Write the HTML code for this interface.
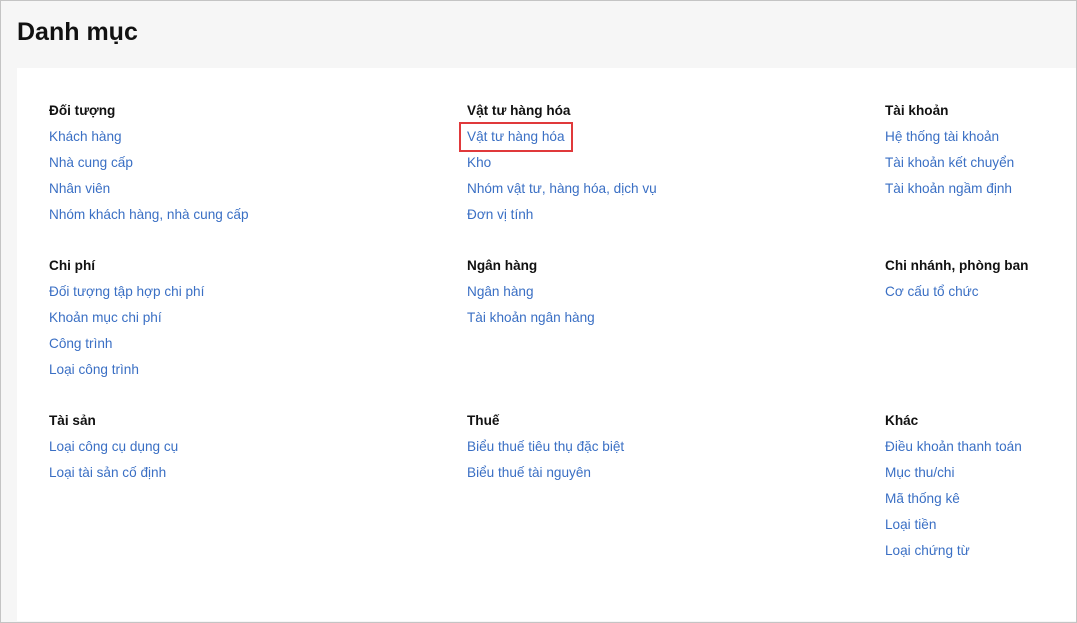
<!DOCTYPE html>
<html><head><meta charset="utf-8"><style>
html,body{margin:0;padding:0}
body{width:1077px;height:623px;overflow:hidden;background:#f6f6f6;font-family:"Liberation Sans","DejaVu Sans",sans-serif;position:relative;box-sizing:border-box;border:1px solid #c4c4c4}
h1{position:absolute;left:16px;top:17px;margin:0;font-size:25px;font-weight:bold;color:#111}
.panel{position:absolute;left:16px;top:67px;right:0;bottom:1px;background:#fff}
.t,.l{position:absolute;white-space:nowrap;font-size:13.6px;line-height:18px}
.t{font-weight:bold;color:#111}
.l{color:#3a6fc4}
.box{position:absolute;left:458px;top:121px;width:110px;height:26px;border:2px solid #e0393b}
</style></head><body>
<h1>Danh mục</h1>
<div class="panel"></div>
<div class="t" style="left:48px;top:101px">Đối tượng</div>
<div class="l" style="left:48px;top:127px">Khách hàng</div>
<div class="l" style="left:48px;top:153px">Nhà cung cấp</div>
<div class="l" style="left:48px;top:179px">Nhân viên</div>
<div class="l" style="left:48px;top:205px">Nhóm khách hàng, nhà cung cấp</div>
<div class="t" style="left:466px;top:101px">Vật tư hàng hóa</div>
<div class="l" style="left:466px;top:127px">Vật tư hàng hóa</div>
<div class="l" style="left:466px;top:153px">Kho</div>
<div class="l" style="left:466px;top:179px">Nhóm vật tư, hàng hóa, dịch vụ</div>
<div class="l" style="left:466px;top:205px">Đơn vị tính</div>
<div class="box"></div>
<div class="t" style="left:884px;top:101px">Tài khoản</div>
<div class="l" style="left:884px;top:127px">Hệ thống tài khoản</div>
<div class="l" style="left:884px;top:153px">Tài khoản kết chuyển</div>
<div class="l" style="left:884px;top:179px">Tài khoản ngầm định</div>
<div class="t" style="left:48px;top:256px">Chi phí</div>
<div class="l" style="left:48px;top:282px">Đối tượng tập hợp chi phí</div>
<div class="l" style="left:48px;top:308px">Khoản mục chi phí</div>
<div class="l" style="left:48px;top:334px">Công trình</div>
<div class="l" style="left:48px;top:360px">Loại công trình</div>
<div class="t" style="left:466px;top:256px">Ngân hàng</div>
<div class="l" style="left:466px;top:282px">Ngân hàng</div>
<div class="l" style="left:466px;top:308px">Tài khoản ngân hàng</div>
<div class="t" style="left:884px;top:256px">Chi nhánh, phòng ban</div>
<div class="l" style="left:884px;top:282px">Cơ cấu tổ chức</div>
<div class="t" style="left:48px;top:411px">Tài sản</div>
<div class="l" style="left:48px;top:437px">Loại công cụ dụng cụ</div>
<div class="l" style="left:48px;top:463px">Loại tài sản cố định</div>
<div class="t" style="left:466px;top:411px">Thuế</div>
<div class="l" style="left:466px;top:437px">Biểu thuế tiêu thụ đặc biệt</div>
<div class="l" style="left:466px;top:463px">Biểu thuế tài nguyên</div>
<div class="t" style="left:884px;top:411px">Khác</div>
<div class="l" style="left:884px;top:437px">Điều khoản thanh toán</div>
<div class="l" style="left:884px;top:463px">Mục thu/chi</div>
<div class="l" style="left:884px;top:489px">Mã thống kê</div>
<div class="l" style="left:884px;top:515px">Loại tiền</div>
<div class="l" style="left:884px;top:541px">Loại chứng từ</div>
</body></html>
